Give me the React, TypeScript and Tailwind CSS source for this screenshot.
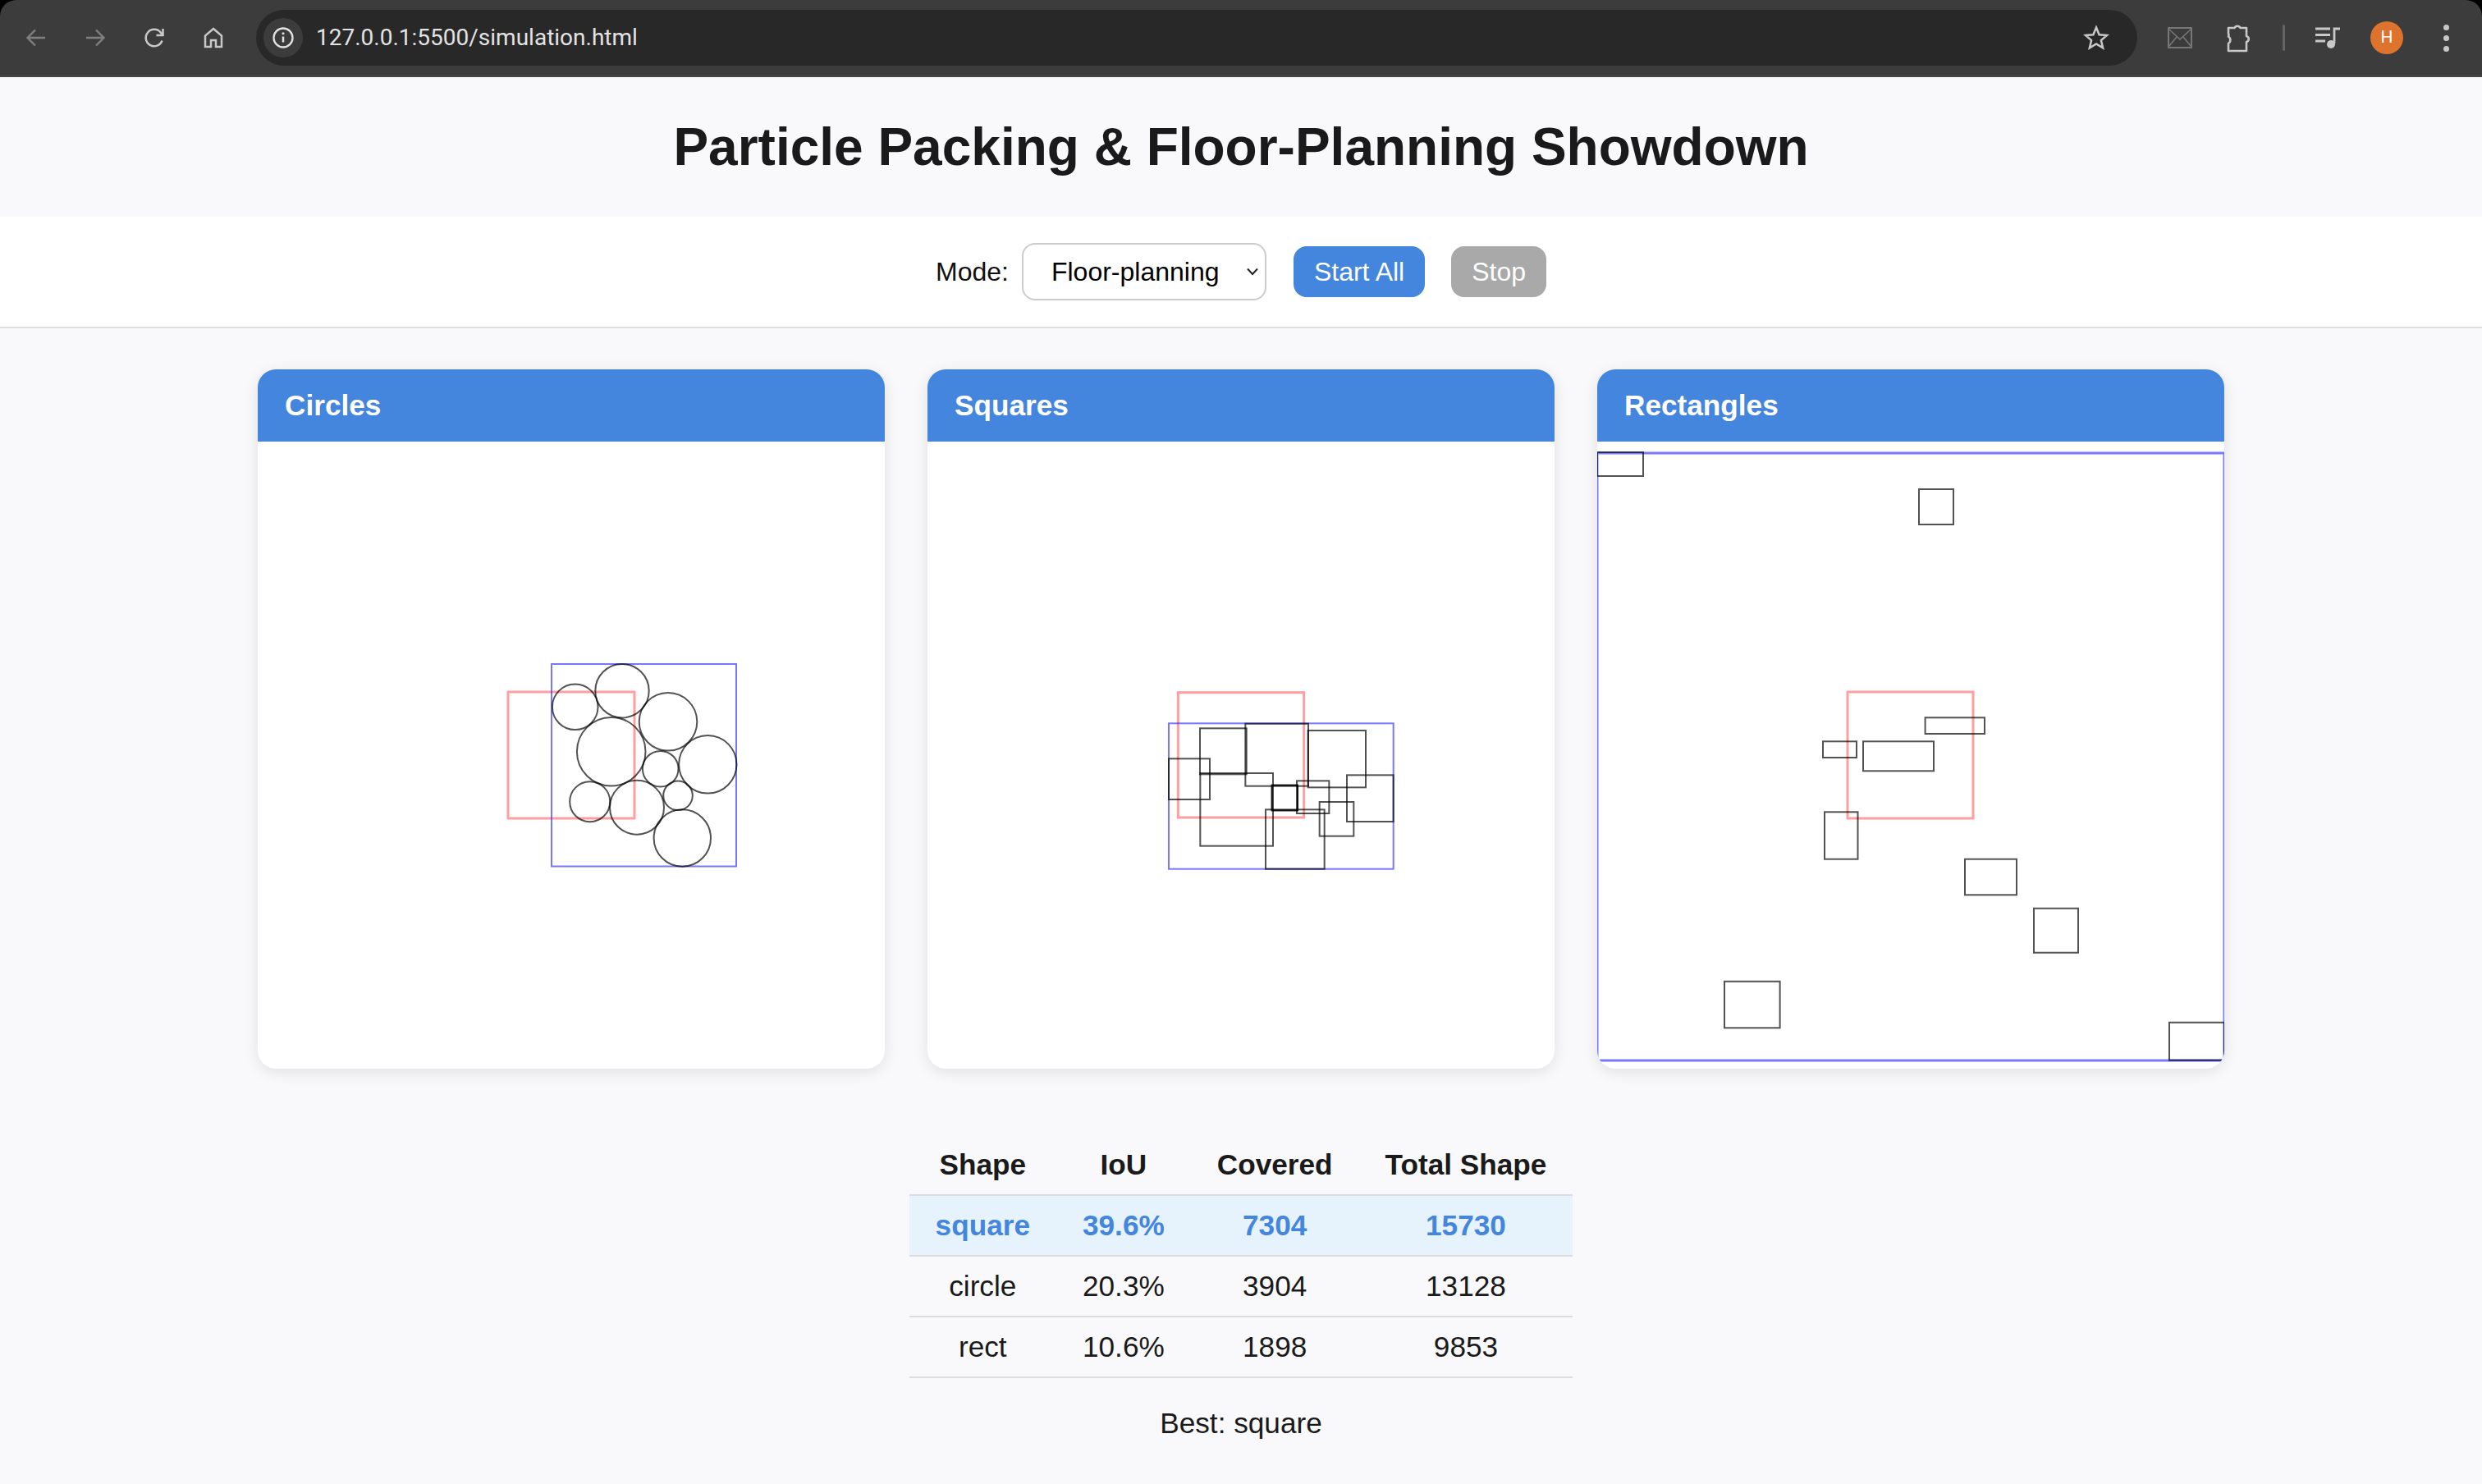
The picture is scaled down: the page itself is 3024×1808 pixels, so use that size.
import React from "react";

const SANS = "font-['Liberation_Sans',Arial,sans-serif]";

function Icon({ children, box = 28 }: { children: React.ReactNode; box?: number }) {
  return (
    <svg width={box} height={box} viewBox="0 0 28 28" fill="none" className="block">
      {children}
    </svg>
  );
}

function Slot({ children }: { children: React.ReactNode }) {
  return <div className="flex h-[72px] w-[72px] shrink-0 items-center justify-center">{children}</div>;
}

const circles: [number, number, number][] = [
  [700.7, 861.3, 27.8],
  [758, 841.7, 32.7],
  [814, 879.3, 35.3],
  [744.7, 915.7, 41.8],
  [862.3, 931.3, 35.2],
  [804.7, 936.7, 21.8],
  [718.7, 976.7, 24.5],
  [776, 983.7, 33],
  [826, 969.3, 17.8],
  [831.3, 1021, 34.7],
];

const squares: [number, number, number, number][] = [
  [156, 172, 326, 340],
  [322, 155, 552, 383],
  [551, 180, 762, 388],
  [42, 283, 192, 432],
  [157, 336, 423, 602],
  [419, 380, 513, 472],
  [419, 380, 513, 472],
  [510, 364, 628, 483],
  [693, 343, 863, 513],
  [593, 441, 718, 566],
  [396, 469, 611, 686],
];

const rects: [number, number, number, number][] = [
  [1946, 551, 2002, 580],
  [2338, 596, 2380, 639],
  [2345.6, 874.3, 2418, 894],
  [2221, 903.3, 2262, 923],
  [2270, 903.3, 2356, 939.3],
  [2223, 989.3, 2263.5, 1046.7],
  [2394, 1046.7, 2457, 1090.3],
  [2478, 1106.7, 2532, 1160.7],
  [2101, 1195.7, 2168.6, 1252.3],
  [2643, 1245.7, 2710, 1291.7],
];

const RED = "rgba(255,40,40,0.45)";
const BLUE = "rgba(30,30,255,0.6)";
const INK = "rgba(0,0,0,0.68)";

function Box({ x1, y1, x2, y2, stroke, w = 2 }: { x1: number; y1: number; x2: number; y2: number; stroke: string; w?: number }) {
  return <rect x={x1} y={y1} width={x2 - x1} height={y2 - y1} fill="none" stroke={stroke} strokeWidth={w} />;
}

function Card({ title, children }: { title: string; children: React.ReactNode }) {
  return (
    <section className="h-[852px] w-[764px] overflow-hidden rounded-[22px] bg-white shadow-[0_4px_18px_rgba(0,0,0,0.1)]">
      <h2 className="flex h-[88px] items-center bg-[#4485dd] pl-[33px] text-[35.2px] font-bold text-white">{title}</h2>
      {children}
    </section>
  );
}

function Canvas({ ox, children }: { ox: number; children: React.ReactNode }) {
  return (
    <svg width={764} height={764} viewBox={`${ox} 538 764 764`} className="block">
      {children}
    </svg>
  );
}

const headers = ["Shape", "IoU", "Covered", "Total Shape"];
const rows = [
  ["square", "39.6%", "7304", "15730"],
  ["circle", "20.3%", "3904", "13128"],
  ["rect", "10.6%", "1898", "9853"],
];

export default function App() {
  return (
    <div className={`${SANS} flex h-[1808px] w-full flex-col overflow-hidden bg-[#f9f9fb] text-[#1a1a1a]`}>
      <div className="bg-black">
        <header className="flex h-[94px] items-center rounded-t-[20px] border-b-2 border-[#464646] bg-[#3c3c3c] pl-2 pr-2">
          <Slot>
            <Icon>
              <path d="M25 14H4M13 4.5 3.5 14 13 23.5" stroke="#808080" strokeWidth="2.4" />
            </Icon>
          </Slot>
          <Slot>
            <Icon>
              <path d="M3 14h21M15 4.5l9.5 9.5-9.5 9.5" stroke="#808080" strokeWidth="2.4" />
            </Icon>
          </Slot>
          <Slot>
            <Icon>
              <path d="M23.5 17.5A10.2 10.2 0 1 1 21.8 7.6L24 10" stroke="#c8c8c8" strokeWidth="2.5" />
              <path d="M24.5 3v8h-8" stroke="#c8c8c8" strokeWidth="2.5" />
            </Icon>
          </Slot>
          <Slot>
            <Icon>
              <path d="M14 3 4 11.5V25h7v-8h6v8h7V11.5Z" stroke="#c8c8c8" strokeWidth="2.5" />
            </Icon>
          </Slot>
          <div className="ml-4 flex h-[68px] min-w-0 flex-1 items-center rounded-[34px] bg-[#282828] pl-[9px] pr-[34px]">
            <div className="flex h-[48px] w-[48px] shrink-0 items-center justify-center rounded-full bg-[#3c3c3c]">
              <Icon>
                <circle cx="14" cy="14" r="11.5" stroke="#e3e3e3" strokeWidth="2.3" />
                <path d="M14 12.5v7" stroke="#e3e3e3" strokeWidth="2.5" />
                <circle cx="14" cy="8.8" r="1.5" fill="#e3e3e3" />
              </Icon>
            </div>
            <span className="ml-4 flex-1 font-['Roboto',sans-serif] text-[28px] leading-none text-[#e3e3e3]">127.0.0.1:5500/simulation.html</span>
            <svg width="32" height="32" viewBox="0 0 32 32" fill="none">
              <path d="M16 3.5 19.6 12.2 29 13 21.9 19.1 24.1 28.3 16 23.4 7.9 28.3 10.1 19.1 3 13 12.4 12.2Z" stroke="#c8c8c8" strokeWidth="2.5" />
            </svg>
          </div>
          <div className="ml-4 flex">
            <Slot>
              <svg width="30" height="26" viewBox="0 0 30 26" fill="none">
                <rect x="1" y="1" width="28" height="24" stroke="#777" strokeWidth="2" />
                <path d="M1 2 15 15 29 2M1 24 11 12M29 24 19 12" stroke="#777" strokeWidth="1.6" />
              </svg>
            </Slot>
            <Slot>
              <svg width="32" height="36" viewBox="0 0 32 36" fill="none">
                <path d="M3 6h7.5a3.8 3.8 0 0 1 7 0H25v10a3.6 3.6 0 0 1 0 7v11H3v-9a5 5 0 0 0 0-8.5a5 5 0 0 0 0-4Z" stroke="#c8c8c8" strokeWidth="2.6" strokeLinejoin="round" />
              </svg>
            </Slot>
          </div>
          <div className="flex h-[72px] w-9 shrink-0 items-center justify-center">
            <div className="h-8 w-[3px] rounded-full bg-[#656565]" />
          </div>
          <Slot>
            <svg width="32" height="28" viewBox="0 0 32 28" fill="none">
              <path d="M1 3h18M1 10.5h18M1 18h12" stroke="#c8c8c8" strokeWidth="2.8" />
              <path d="M24 21V3h7" stroke="#c8c8c8" strokeWidth="2.8" />
              <circle cx="20" cy="22" r="5" fill="#c8c8c8" />
            </svg>
          </Slot>
          <Slot>
            <div className="flex h-10 w-10 items-center justify-center rounded-full bg-[#dd732c] font-['Roboto',sans-serif] text-[21px] text-white">H</div>
          </Slot>
          <Slot>
            <div className="flex flex-col gap-[6px]">
              <div className="h-[7px] w-[7px] rounded-full bg-[#c8c8c8]" />
              <div className="h-[7px] w-[7px] rounded-full bg-[#c8c8c8]" />
              <div className="h-[7px] w-[7px] rounded-full bg-[#c8c8c8]" />
            </div>
          </Slot>
        </header>
      </div>

      <h1 className="flex h-[170px] shrink-0 items-center justify-center text-[64px] font-bold">Particle Packing &amp; Floor-Planning Showdown</h1>

      <div className="flex h-[136px] shrink-0 items-center justify-center border-b-2 border-[#dedede] bg-white text-[32px]">
        <label className="text-[#111]">Mode:</label>
        <div className="relative ml-4">
          <select className="block h-[70px] w-[298px] appearance-none rounded-[16px] border-2 border-[#cccccc] bg-white pl-[34px] text-[32px] text-black outline-none" defaultValue="Floor-planning">
            <option>Circle packing</option>
            <option>Floor-planning</option>
          </select>
          <svg width="14" height="10" viewBox="0 0 14 10" fill="none" className="pointer-events-none absolute right-[10px] top-[30px]">
            <path d="M1 1.5 7 8l6-6.500" stroke="#222" strokeWidth="2" />
          </svg>
        </div>
        <button className="ml-[33px] h-[62px] rounded-[16px] bg-[#4485dd] px-[25px] text-[32px] text-white">Start All</button>
        <button className="ml-8 h-[62px] rounded-[16px] bg-[#a9a9a9] px-[25px] text-[32px] text-white">Stop</button>
      </div>

      <main className="flex flex-col items-center pt-[50px]">
        <div className="flex gap-[52px]">
          <Card title="Circles">
            <Canvas ox={314}>
              <Box x1={619} y1={843} x2={773} y2={997} stroke={RED} w={3} />
              <Box x1={672} y1={809} x2={897} y2={1055.500} stroke={BLUE} />
              {circles.map(([cx, cy, r], i) => (
                <circle key={i} cx={cx} cy={cy} r={r} fill="none" stroke={INK} strokeWidth={2} />
              ))}
            </Canvas>
          </Card>
          <Card title="Squares">
            <Canvas ox={1130}>
              <Box x1={1435.300} y1={843.700} x2={1588.700} y2={996} stroke={RED} w={3} />
              <Box x1={1424} y1={881.300} x2={1697.700} y2={1058.700} stroke={BLUE} />
              {squares.map(([a, b, c, d], i) => (
                <Box key={i} x1={1410 + a / 3} y1={830 + b / 3} x2={1410 + c / 3} y2={830 + d / 3} stroke={INK} />
              ))}
            </Canvas>
          </Card>
          <Card title="Rectangles">
            <Canvas ox={1946}>
              <Box x1={2251} y1={843} x2={2404} y2={997} stroke={RED} w={3} />
              <Box x1={1946} y1={552} x2={2710} y2={1292} stroke={BLUE} w={3} />
              {rects.map(([a, b, c, d], i) => (
                <Box key={i} x1={a} y1={b} x2={c} y2={d} stroke={INK} />
              ))}
            </Canvas>
          </Card>
        </div>

        <table className="mt-[81px] border-collapse text-[35.2px] leading-[40px]">
          <thead>
            <tr className="border-b-2 border-[#dddde0]">
              {headers.map((h) => (
                <th key={h} className="px-8 py-4 text-center font-bold">{h}</th>
              ))}
            </tr>
          </thead>
          <tbody>
            {rows.map((r, i) => (
              <tr key={r[0]} className={`border-b-2 border-[#dddde0] ${i === 0 ? "bg-[#e6f3fd] font-bold text-[#4485dd]" : ""}`}>
                {r.map((c) => (
                  <td key={c} className="px-8 py-4 text-center">{c}</td>
                ))}
              </tr>
            ))}
          </tbody>
        </table>

        <p className="mt-[35px] text-[35.2px] leading-[40px]">Best: square</p>
      </main>
    </div>
  );
}
